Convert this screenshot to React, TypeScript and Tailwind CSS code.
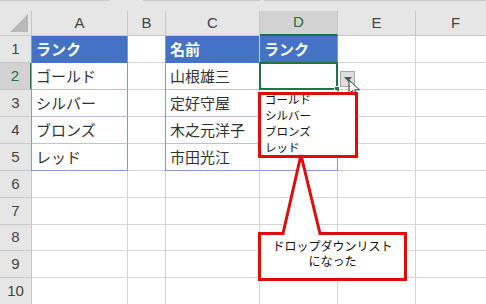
import React from 'react';

const COLS = [
  { key: 'A', w: 96 },
  { key: 'B', w: 38 },
  { key: 'C', w: 94 },
  { key: 'D', w: 78 },
  { key: 'E', w: 78 },
  { key: 'F', w: 80 },
];

const jp = { fontFamily: '"Noto Sans CJK JP", "Noto Sans", sans-serif' };
const lat = { fontFamily: '"Liberation Sans", Arial, sans-serif' };

type Cell = { text?: string; head?: boolean; table?: 'first' | 'mid' | 'last' | 'single'; last?: boolean };

const rows: Record<number, Record<string, Cell>> = {
  1: { A: { text: 'ランク', head: true, table: 'single' }, C: { text: '名前', head: true, table: 'first' }, D: { text: 'ランク', head: true, table: 'last' } },
  2: { A: { text: 'ゴールド', table: 'single' }, C: { text: '山根雄三', table: 'first' }, D: { table: 'last' } },
  3: { A: { text: 'シルバー', table: 'single' }, C: { text: '定好守屋', table: 'first' }, D: { table: 'last' } },
  4: { A: { text: 'ブロンズ', table: 'single' }, C: { text: '木之元洋子', table: 'first' }, D: { table: 'last' } },
  5: { A: { text: 'レッド', table: 'single', last: true }, C: { text: '市田光江', table: 'first', last: true }, D: { table: 'last', last: true } },
};

function GridCell({ w, cell, selected }: { w: number; cell?: Cell; selected?: boolean }) {
  if (!cell) {
    return <div className="h-full shrink-0 border-r border-b border-[#d4d4d4] bg-white" style={{ width: w }} />;
  }
  const blueR = cell.table === 'single' || cell.table === 'last';
  const blueL = cell.table === 'single' || cell.table === 'first';
  return (
    <div
      className={
        'relative h-full shrink-0 border-r border-b flex items-center px-[4px] text-[15px] whitespace-nowrap overflow-visible ' +
        (cell.head ? 'bg-[#4472c4] text-white font-bold ' : 'bg-white text-[#333] ') +
        (blueR ? 'border-r-[#7f9bd4] ' : 'border-r-[#d4d4d4] ') +
        (cell.head ? 'border-b-[#4472c4] ' : cell.last ? 'border-b-[#7f9bd4] ' : 'border-b-[#b4c3e6] ')
      }
      style={{ width: w, ...jp }}
    >
      {blueL && <div className="absolute left-[-1px] top-0 bottom-[-1px] w-px bg-[#7f9bd4]" />}
      <span className="relative">{cell.text}</span>
      {selected && (
        <div className="absolute left-[-1px] top-[-1px] right-[-1px] bottom-[-1px] border-2 border-[#217346]">
          <div className="absolute right-[-4px] bottom-[-4px] w-[6px] h-[6px] bg-[#217346] border border-white" />
        </div>
      )}
    </div>
  );
}

export default function App() {
  const rowH = [27, 27, 27, 27, 27, 27, 27, 26, 27, 27];
  return (
    <div className="relative w-[486px] h-[304px] overflow-hidden bg-white select-none">
      {/* formula bar edge */}
      <div className="flex h-[11px] bg-[#e6e6e6]">
        <div className="w-[110px] h-px bg-[#c8c8c8]" />
        <div className="w-[33px]" />
        <div className="w-[117px] h-px bg-[#c8c8c8]" />
        <div className="w-[4px]" />
        <div className="flex-1 h-px bg-[#c8c8c8]" />
      </div>

      {/* column headers */}
      <div className="flex h-[25px] bg-[#e6e6e6]" style={lat}>
        <div className="relative w-[32px] shrink-0 border-r border-b border-[#c8c8c8]">
          <svg className="absolute right-[3px] bottom-[3px]" width="18" height="18" viewBox="0 0 18 18">
            <polygon points="18,0 18,18 0,18" fill="#b9b9b9" />
          </svg>
        </div>
        {COLS.map((c) => (
          <div
            key={c.key}
            className={
              'shrink-0 flex items-center justify-center text-[15px] border-r border-[#c8c8c8] ' +
              (c.key === 'D' ? 'bg-[#d2d2d2] text-[#217346] border-b-2 border-b-[#217346]' : 'text-[#444] border-b border-b-[#c8c8c8]')
            }
            style={{ width: c.w }}
          >
            {c.key}
          </div>
        ))}
      </div>

      {/* rows */}
      {rowH.map((h, i) => {
        const r = i + 1;
        const sel = r === 2;
        return (
          <div key={r} className="flex" style={{ height: h }}>
            <div
              className={
                'w-[32px] shrink-0 flex items-center justify-center text-[15px] border-b border-[#c8c8c8] ' +
                (sel ? 'bg-[#d2d2d2] text-[#217346] border-r-2 border-r-[#217346]' : 'bg-[#e6e6e6] text-[#444] border-r border-r-[#c8c8c8]')
              }
              style={lat}
            >
              {r}
            </div>
            {COLS.map((c) => (
              <GridCell key={c.key} w={c.w} cell={rows[r]?.[c.key]} selected={sel && c.key === 'D'} />
            ))}
          </div>
        );
      })}

      {/* dropdown button */}
      <div className="absolute left-[340px] top-[71px] w-[15px] h-[16px] bg-[#dedede] border border-[#a8a8a8] flex items-center justify-center">
        <svg width="8" height="5" viewBox="0 0 8 5">
          <polygon points="0,0 8,0 4,4.5" fill="#555" />
        </svg>
      </div>

      {/* mouse cursor */}
      <svg className="absolute left-[348px] top-[79px]" width="14" height="20" viewBox="0 0 14 20">
        <path d="M1 1 L1 15 L4.5 11.5 L7 17.5 L9 16.7 L6.6 10.8 L11.5 10.8 Z" fill="white" stroke="#333" strokeWidth="1" strokeLinejoin="miter" />
      </svg>

      {/* dropdown list */}
      <div className="absolute left-[258px] top-[92px] w-[100px] h-[66px] border-[3px] border-[#e00b0b] bg-white overflow-hidden">
        <div className="flex flex-col pl-[4px] mt-[-4px] text-[11.5px] leading-[16px] text-[#111]" style={jp}>
          <span>ゴールド</span>
          <span>シルバー</span>
          <span>ブロンズ</span>
          <span>レッド</span>
        </div>
      </div>

      {/* callout */}
      <svg className="absolute left-0 top-0" width="486" height="304" viewBox="0 0 486 304">
        <path
          d="M259.5 233.5 L283 233.5 L301 155 L320 233.5 L405.5 233.5 L405.5 279.5 L259.5 279.5 Z"
          fill="white"
          stroke="#e00b0b"
          strokeWidth="3"
          strokeLinejoin="miter"
        />
      </svg>
      <div
        className="absolute left-[261px] top-[238px] w-[143px] flex flex-col items-center text-[12px] leading-[15px] text-[#111]"
        style={jp}
      >
        <span>ドロップダウンリスト</span>
        <span>になった</span>
      </div>
    </div>
  );
}
